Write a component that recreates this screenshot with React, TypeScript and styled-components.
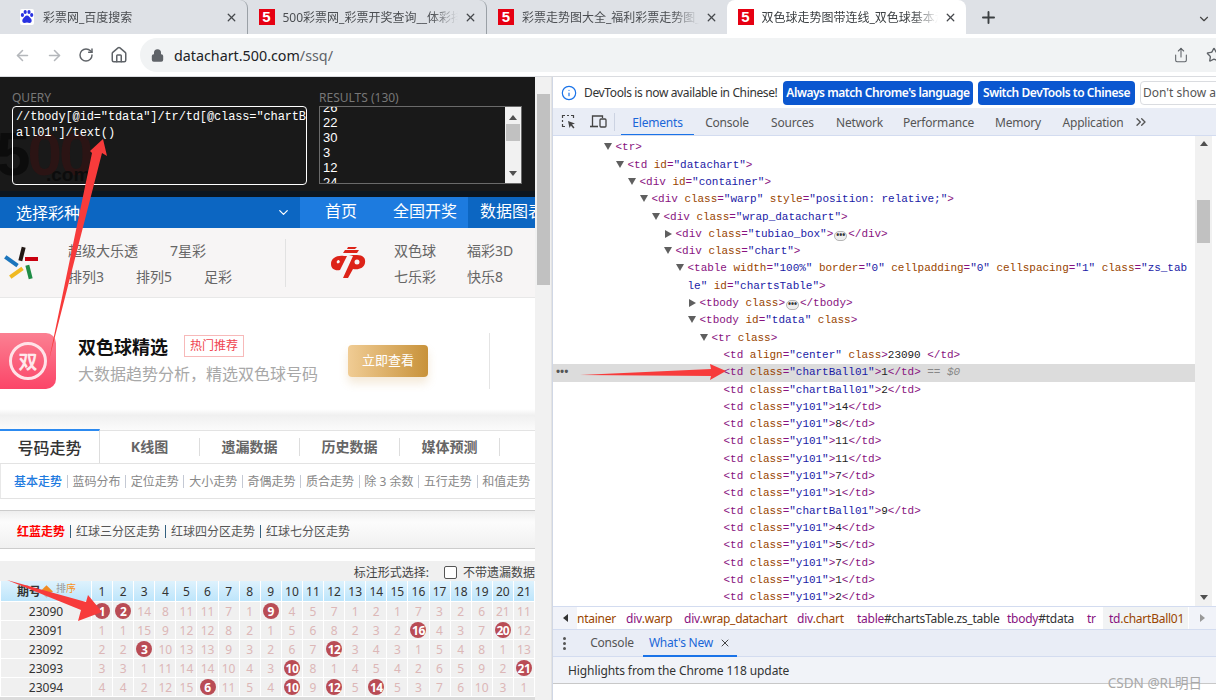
import { Fragment } from 'react';
import { createGlobalStyle, styled } from 'styled-components';
import {
  ArrowLeft, ArrowRight, RotateCw, Home, Lock, Share, Star, X, Plus, ChevronDown, Info, ChevronsRight,
} from 'lucide-react';

const GlobalStyle = createGlobalStyle`
html, body {
  margin: 0;
  padding: 0;
  overflow: hidden;
  background: #fff;
}
* {
  box-sizing: border-box;
}
`;

const SANS = `"Noto Sans", "Noto Sans CJK SC", "Liberation Sans", sans-serif`;
const MONO = `"Liberation Mono", "Noto Sans CJK SC", monospace`;

const Shell = styled.div`
position: relative;
width: 1216px;
height: 700px;
display: flex;
flex-direction: column;
overflow: hidden;
font-family: ${SANS};
`;

const TabStrip = styled.div`
height: 34px;
flex: none;
display: flex;
align-items: stretch;
padding-left: 8px;
background: #dee1e6;
`;

const Tab = styled.div<{ $active?: boolean; $sep?: boolean }>`
width: 239.5px;
display: flex;
align-items: center;
padding: 0 9px 0 11px;
border-radius: 8px 8px 0 0;
background: ${(p) => (p.$active ? '#fff' : 'transparent')};
color: ${(p) => (p.$active ? '#3c4043' : '#4b4e52')};
border-right: ${(p) => (p.$sep ? '1px solid #9aa0a6' : 'none')};
background-clip: padding-box;
`;

const TabTitle = styled.span`
flex: 1;
min-width: 0;
margin: 0 6px 0 8px;
font-size: 12px;
white-space: nowrap;
overflow: hidden;
-webkit-mask-image: linear-gradient(90deg, #000 85%, transparent);
mask-image: linear-gradient(90deg, #000 85%, transparent);
`;

const FaviconSlot = styled.span`
width: 16px;
height: 16px;
flex: none;
display: flex;
justify-content: center;
`;

const FiveIcon = styled.span`
width: 16px;
height: 16px;
flex: none;
display: flex;
align-items: center;
justify-content: center;
background: #e60012;
color: #fff;
font: 900 15px/16px "Liberation Sans", sans-serif;
`;

const NewTab = styled.div`
width: 44px;
display: flex;
align-items: center;
justify-content: center;
color: #3c4043;
`;

const StripEnd = styled.div`
margin-left: auto;
padding: 9px 5px 0 0;
color: #444;
`;

const Toolbar = styled.div`
height: 43px;
flex: none;
display: flex;
align-items: center;
padding: 0 0 0 14px;
background: #fff;
border-bottom: 1px solid #dadce0;
`;

const NavIcon = styled.span<{ $dim?: boolean }>`
width: 32px;
display: flex;
color: ${(p) => (p.$dim ? '#b4b7bb' : '#5f6368')};
`;

const Omnibox = styled.div`
flex: 1;
height: 34px;
margin-left: -2px;
display: flex;
align-items: center;
padding-left: 11px;
border-radius: 17px 0 0 17px;
background: #f1f3f4;
color: #5f6368;
`;

const Url = styled.span`
margin-left: 10px;
font-size: 14.3px;
color: #202124;
& em {
  font-style: normal;
  color: #5f6368;
}
`;

const OmniActions = styled.div`
margin-left: auto;
display: flex;
gap: 17px;
margin-right: -6px;
color: #5f6368;
`;

const Main = styled.div`
flex: 1;
min-height: 0;
display: flex;
`;

const PagePane = styled.div`
width: 552px;
flex: none;
display: flex;
`;

const Page = styled.div`
width: 535px;
flex: none;
overflow: hidden;
background: #fff;
`;

const PageScroll = styled.div`
width: 17px;
flex: none;
padding: 17px 1px 0 2px;
background: #f1f1f1;
border-right: 1px solid #e3e3e3;
`;

const ScrollThumb = styled.div<{ $h: number }>`
height: ${(p) => p.$h}px;
background: #c1c1c1;
`;

const Query = styled.div`
position: relative;
height: 114px;
padding: 13px 13px 0 12px;
display: flex;
gap: 12px;
background: #191919;
overflow: hidden;
`;

const GhostLogo = styled.div`
position: absolute;
left: -4px;
top: 46px;
font: 700 62px/62px "Liberation Sans", sans-serif;
letter-spacing: -3px;
color: #0c0c0c;
& em {
  font-style: normal;
  color: #2b1414;
}
& small {
  position: absolute;
  left: 50px;
  top: 42px;
  font-size: 19px;
  line-height: 20px;
  letter-spacing: 0;
}
`;

const QueryCol = styled.div<{ $w: number }>`
position: relative;
width: ${(p) => p.$w}px;
flex: none;
`;

const QueryLabel = styled.div`
height: 16px;
font-size: 12px;
line-height: 15px;
color: #777;
`;

const QueryBox = styled.div`
position: relative;
height: 79px;
padding: 2px 0 0 3px;
border: 1px solid #fff;
border-radius: 4px;
color: #fff;
font: 12px/16px ${MONO};
letter-spacing: -0.13px;
word-break: break-all;
`;

const ResultBox = styled.div`
height: 78px;
display: flex;
border: 1px solid #6a6a6a;
color: #fff;
overflow: hidden;
`;

const ResultList = styled.div`
flex: 1;
margin-top: -7px;
padding-left: 3px;
font: 13px/15px "Liberation Sans", sans-serif;
`;

const ResultScroll = styled.div`
width: 16px;
flex: none;
padding: 17px 1px 0;
display: flex;
flex-direction: column;
background: #f1f1f1;
color: #505050;
`;

const TinyArrow = styled.span<{ $down?: boolean }>`
display: block;
width: 0;
height: 0;
border-left: 4px solid transparent;
border-right: 4px solid transparent;
${(p) => (p.$down ? 'border-top: 5px solid currentColor;' : 'border-bottom: 5px solid currentColor;')}
`;

const ResultUp = styled.div`
position: absolute;
right: 5px;
top: 25px;
color: #505050;
`;

const ResultDown = styled.div`
position: absolute;
right: 5px;
top: 81px;
color: #505050;
`;

const Band = styled.div`
height: 6px;
background: #0c1620;
`;

const NavBar = styled.div`
height: 31px;
display: flex;
background: #0c66c2;
color: #fff;
font-size: 16px;
line-height: 28px;
white-space: nowrap;
overflow: hidden;
`;

const NavPick = styled.div`
width: 300px;
flex: none;
display: flex;
align-items: center;
justify-content: space-between;
padding: 0 9px 0 16px;
`;

const NavHome = styled.div`
width: 168px;
flex: none;
display: flex;
gap: 36px;
padding-left: 25px;
background: #1d7bdf;
`;

const NavRest = styled.div`
padding-left: 12px;
`;

const Lottery = styled.div`
height: 70px;
display: flex;
align-items: center;
background: #f7f5f5;
border-bottom: 1px solid #e8e8e8;
color: #666;
font-size: 14px;
`;

const LotteryGroup = styled.div<{ $divided?: boolean; $w: number }>`
width: ${(p) => p.$w}px;
height: 48px;
flex: none;
display: flex;
align-items: center;
${(p) => (p.$divided ? 'border-right: 1px solid #e2e2e2;' : '')}
`;

const LogoBox = styled.span<{ $left: number; $w: number }>`
margin-left: ${(p) => p.$left}px;
width: ${(p) => p.$w}px;
flex: none;
display: flex;
`;

const LinkRows = styled.div`
display: flex;
flex-direction: column;
gap: 7px;
padding-top: 1px;
`;

const LinkRow = styled.div<{ $gap: number }>`
display: flex;
gap: ${(p) => p.$gap}px;
line-height: 19px;
white-space: nowrap;
`;

const Promo = styled.div`
height: 111px;
padding-top: 35px;
display: flex;
align-items: flex-start;
`;

const PromoIcon = styled.div`
width: 56px;
height: 56px;
flex: none;
display: flex;
align-items: center;
justify-content: center;
border-radius: 0 10px 10px 0;
background: linear-gradient(180deg, #fb8092, #fb4568);
`;

const PromoSeal = styled.span`
width: 38px;
height: 38px;
display: flex;
align-items: center;
justify-content: center;
border: 3px solid #ffe3e8;
border-radius: 50%;
color: #ffe9ec;
font-size: 19px;
font-weight: 700;
`;

const PromoBody = styled.div`
width: 270px;
flex: none;
margin-left: 22px;
`;

const PromoHead = styled.div`
height: 26px;
display: flex;
align-items: center;
gap: 16px;
`;

const PromoTitle = styled.span`
font-size: 18px;
font-weight: 700;
color: #111;
`;

const PromoTag = styled.span`
height: 22px;
padding: 0 5px;
border: 1px solid #f7b9b9;
font-size: 12px;
line-height: 20px;
color: #f0454f;
`;

const PromoDesc = styled.div`
margin-top: 3px;
font-size: 16px;
line-height: 24px;
color: #a8a8a8;
white-space: nowrap;
`;

const PromoButton = styled.div`
width: 80px;
height: 32px;
flex: none;
margin: 12px 0 0 0;
border-radius: 4px;
background: linear-gradient(90deg, #f0cc94, #c8923a);
box-shadow: 0 6px 10px rgba(200, 146, 58, 0.2);
color: #fff;
font-size: 13px;
line-height: 30px;
text-align: center;
`;

const PromoDivider = styled.div`
width: 1px;
height: 56px;
flex: none;
margin-left: 61px;
background: #e4e4e4;
`;

const Fade = styled.div`
height: 21px;
background: linear-gradient(180deg, #fff, #f0f0f0 30%, #fbfbfb);
`;

const TabsRow = styled.div`
height: 34px;
display: flex;
align-items: stretch;
border-top: 1px solid #e3e3e3;
border-bottom: 1px solid #e3e3e3;
white-space: nowrap;
`;

const ChartTab = styled.div<{ $active?: boolean }>`
width: 100px;
flex: none;
display: flex;
align-items: center;
justify-content: center;
${(p) => (p.$active
    ? `
  height: 34px;
  margin-top: -2px;
  border-top: 2px solid #2c8af0;
  border-right: 1px solid #ddd;
  background: #fff;
  color: #333;
  font-size: 16px;
  font-weight: 500;
`
    : `
  color: #666;
  font-size: 14px;
  font-weight: 700;
  & span {
    width: 100%;
    border-right: 1px solid #ddd;
    text-align: center;
    line-height: 18px;
  }
`)}
`;

const SubNav = styled.div`
height: 35px;
display: flex;
align-items: center;
padding-left: 13px;
border-left: 1px solid #e8e8e8;
border-bottom: 1px solid #e3e3e3;
font-size: 12px;
color: #888;
white-space: nowrap;
`;

const SubLink = styled.span<{ $on?: boolean }>`
color: ${(p) => (p.$on ? '#1e7be0' : '#888')};
font-weight: ${(p) => (p.$on ? 500 : 400)};
`;

const Bar = styled.i`
width: 1px;
height: 13px;
flex: none;
margin: 0 4.7px;
background: #c4c9d4;
`;

const RedBlue = styled.div`
height: 39px;
margin-top: 11px;
display: flex;
align-items: center;
padding: 3px 0 0 17px;
border-top: 1px solid #ccc;
border-bottom: 1px solid #ccc;
background: linear-gradient(180deg, #eee, #fcfcfc 30%, #f0f0f0);
font-size: 12px;
color: #555;
white-space: nowrap;
`;

const RedLink = styled.span`
color: #f00;
font-weight: 700;
`;

const DarkBar = styled.i`
width: 1px;
height: 13px;
flex: none;
margin: 0 5px;
background: #33607f;
`;

const Chart = styled.div`
margin-top: 12px;
background: #f0f0f0;
overflow: hidden;
`;

const ChartTools = styled.div`
height: 20px;
display: flex;
align-items: center;
justify-content: flex-end;
padding-top: 2px;
font-size: 12px;
color: #444;
white-space: nowrap;
`;

const Check = styled.span`
width: 13px;
height: 13px;
margin: 0 6px 0 15px;
border: 1px solid #555;
border-radius: 2px;
background: #fff;
`;

const Grid = styled.div`
width: 560px;
display: grid;
grid-template-columns: 90px repeat(22, 20.1px);
grid-auto-rows: 18px;
grid-template-rows: 20px;
gap: 1px;
padding: 0 0 1px 1px;
background: #fff;
`;

const HeadCell = styled.div`
display: flex;
align-items: center;
justify-content: center;
background: linear-gradient(180deg, #def2fd, #bde5fb);
font-size: 12px;
color: #333;
`;

const HeadFirst = styled(HeadCell)`
justify-content: flex-start;
padding-left: 16px;
font-weight: 700;
`;

const SortMark = styled.span`
margin: 0 0 0 1px;
width: 9px;
height: 9px;
transform: rotate(45deg);
background: linear-gradient(135deg, #f08a24 50%, #bbb 50%);
`;

const SortText = styled.span`
margin: -7px 0 0 5px;
font-size: 10px;
font-weight: 400;
color: #999;
& em {
  font-style: normal;
  color: #f7941d;
}
`;

const IssueCell = styled.div`
display: flex;
align-items: center;
justify-content: center;
background: #f0f0f0;
font-size: 12px;
color: #333;
`;

const NumCell = styled.div`
display: flex;
align-items: center;
justify-content: center;
background: #f0f0f0;
font-size: 12px;
color: #dcb7b7;
`;

const Ball = styled.span`
width: 16px;
height: 16px;
flex: none;
display: flex;
align-items: center;
justify-content: center;
border-radius: 50%;
background: #b94c55;
color: #fff;
font-size: 12px;
font-weight: 700;
letter-spacing: -0.5px;
`;

const Hscroll = styled.div`
height: 4px;
background: #dcdcdc;
`;

const DevTools = styled.div`
flex: 1;
min-width: 0;
display: flex;
flex-direction: column;
border-left: 1px solid #d0d7e5;
font-size: 12px;
color: #444;
`;

const InfoBar = styled.div`
height: 31px;
flex: none;
display: flex;
align-items: center;
padding-left: 8px;
gap: 5px;
background: #fff;
white-space: nowrap;
overflow: hidden;
& > svg {
  flex: none;
}
`;

const InfoText = styled.span`
width: 194px;
flex: none;
margin-left: 2px;
font-size: 12px;
letter-spacing: -0.37px;
color: #333;
`;

const InfoButton = styled.span<{ $w: number; $plain?: boolean }>`
width: ${(p) => p.$w}px;
height: 24px;
flex: none;
display: flex;
align-items: center;
justify-content: ${(p) => (p.$plain ? 'flex-start' : 'center')};
padding-left: ${(p) => (p.$plain ? '2px' : '0')};
border-radius: 4px;
background: ${(p) => (p.$plain ? '#fff' : '#0b57d0')};
border: ${(p) => (p.$plain ? '1px solid #dadce0' : 'none')};
color: ${(p) => (p.$plain ? '#555' : '#fff')};
font-size: 12px;
font-weight: ${(p) => (p.$plain ? 400 : 600)};
letter-spacing: ${(p) => (p.$plain ? '0' : '-0.45px')};
`;

const DevTabs = styled.div`
height: 28px;
flex: none;
display: flex;
align-items: stretch;
padding-left: 8px;
background: #e9edf6;
border-bottom: 1px solid #d3dcf0;
white-space: nowrap;
overflow: hidden;
`;

const DevIcon = styled.span<{ $w: number }>`
width: ${(p) => p.$w}px;
flex: none;
display: flex;
align-items: center;
color: #444;
`;

const DevSep = styled.i`
width: 1px;
height: 18px;
flex: none;
align-self: center;
margin: 0 6px 0 0;
background: #ccd3e2;
`;

const DevTab = styled.span<{ $w: number; $on?: boolean }>`
width: ${(p) => p.$w}px;
flex: none;
display: flex;
align-items: center;
justify-content: center;
padding-top: 2px;
margin-bottom: -1px;
border-bottom: 2px solid ${(p) => (p.$on ? '#1a73e8' : 'transparent')};
color: ${(p) => (p.$on ? '#1a66d8' : '#555')};
font-size: 12px;
letter-spacing: -0.2px;
`;

const More = styled.span`
display: flex;
align-items: center;
color: #555;
`;

const TreePane = styled.div`
flex: 1;
min-height: 0;
display: flex;
background: #fff;
`;

const Tree = styled.div`
flex: 1;
min-width: 0;
padding-top: 3.4px;
font: 11px/17.3px ${MONO};
letter-spacing: -0.03px;
overflow: hidden;
`;

const TreeRow = styled.div<{ $depth: number; $hi?: boolean }>`
position: relative;
display: flex;
padding: 0 5px 0 ${(p) => 50.5 + p.$depth * 12}px;
background: ${(p) => (p.$hi ? '#dcdcdc' : 'transparent')};
`;

const Twisty = styled.span<{ $open?: boolean; $leaf?: boolean }>`
width: 12px;
flex: none;
display: flex;
justify-content: flex-start;
padding-top: 4px;
&::before {
  content: '';
  display: ${(p) => (p.$leaf ? 'none' : 'block')};
  width: 0;
  height: 0;
  ${(p) => (p.$open
    ? 'border-left: 4px solid transparent; border-right: 4px solid transparent; border-top: 7px solid #5f5f5f;'
    : 'border-top: 4px solid transparent; border-bottom: 4px solid transparent; border-left: 7px solid #5f5f5f; margin-left: 1px;')}
}
`;

const Code = styled.div`
flex: 1;
min-width: 0;
word-break: break-all;
white-space: pre-wrap;
color: #222;
`;

const TagText = styled.span`
color: #881280;
`;

const AttrText = styled.span`
color: #994500;
`;

const ValText = styled.span`
color: #1a1aa6;
`;

const Ellipsis = styled.span`
display: inline-block;
width: 13px;
height: 10px;
margin: 0 1px;
border: 1px solid #b5b5b5;
border-radius: 5px;
background: #eee;
vertical-align: -1px;
font: 700 8px/6px ${SANS};
text-align: center;
color: #333;
`;

const DollarZero = styled.span`
color: #888;
& em {
  font-style: italic;
}
`;

const RowDots = styled.span`
position: absolute;
left: 3px;
top: 0;
font: 700 11px/14px ${SANS};
color: #555;
`;

const TreeScroll = styled.div`
width: 21px;
flex: none;
display: flex;
flex-direction: column;
align-items: center;
padding: 5px 4px 0 0;
color: #505050;
background: linear-gradient(90deg, #f1f1f1 17px, #fff 17px);
`;

const TreeThumb = styled.div`
width: 13px;
height: 43px;
margin-top: 54px;
background: #c1c1c1;
`;

const TreeBottomArrow = styled.div`
margin-top: auto;
padding-bottom: 6px;
`;

const Crumbs = styled.div`
height: 24px;
flex: none;
display: flex;
align-items: stretch;
background: #fff;
border-top: 1px solid #d3dcf0;
border-bottom: 1px solid #d3dcf0;
font-size: 12px;
white-space: nowrap;
overflow: hidden;
`;

const CrumbArrow = styled.span<{ $dim?: boolean; $w: number }>`
width: ${(p) => p.$w}px;
flex: none;
display: flex;
align-items: center;
justify-content: center;
background: #f1f3f9;
color: ${(p) => (p.$dim ? '#999' : '#333')};
`;

const CrumbSide = styled.span<{ $right?: boolean }>`
width: 0;
height: 0;
border-top: 4px solid transparent;
border-bottom: 4px solid transparent;
${(p) => (p.$right ? 'border-left: 5px solid currentColor;' : 'border-right: 5px solid currentColor;')}
`;

const CrumbList = styled.div`
flex: 1;
min-width: 0;
display: flex;
align-items: stretch;
overflow: hidden;
`;

const Crumb = styled.span<{ $w: number; $on?: boolean }>`
width: ${(p) => p.$w}px;
flex: none;
display: flex;
align-items: center;
padding-left: ${(p) => (p.$on ? '6px' : '0')};
background: ${(p) => (p.$on ? '#f1f3f4' : 'transparent')};
color: #994500;
letter-spacing: -0.25px;
& b {
  font-weight: 400;
  color: #881280;
}
& em {
  font-style: normal;
  color: #333;
}
`;

const DrawerTabs = styled.div`
height: 27px;
flex: none;
display: flex;
align-items: stretch;
background: #e9edf6;
border-bottom: 1px solid #d3dcf0;
`;

const KebabSlot = styled.span`
width: 28px;
flex: none;
display: flex;
flex-direction: column;
align-items: center;
justify-content: center;
gap: 2px;
padding-right: 5px;
& i {
  width: 3px;
  height: 3px;
  border-radius: 50%;
  background: #555;
}
`;

const DrawerTab = styled.span<{ $on?: boolean; $w: number }>`
width: ${(p) => p.$w}px;
flex: none;
display: flex;
align-items: center;
justify-content: center;
gap: 6px;
margin-bottom: -1px;
border-bottom: 2px solid ${(p) => (p.$on ? '#1a73e8' : 'transparent')};
color: ${(p) => (p.$on ? '#1a66d8' : '#555')};
letter-spacing: -0.2px;
`;

const DrawerBody = styled.div`
height: 27px;
flex: none;
display: flex;
align-items: center;
padding-left: 15px;
background: #f1f3f8;
border-bottom: 1px solid #c8c8c8;
color: #333;
letter-spacing: -0.1px;
`;

const DrawerRest = styled.div`
height: 16px;
flex: none;
background: #fff;
`;

const Watermark = styled.div`
position: absolute;
right: 14px;
top: 674px;
font-size: 13.5px;
line-height: 18px;
color: #a8a8a8;
`;

const Marks = styled.svg`
position: absolute;
left: 0;
top: 0;
pointer-events: none;
`;

const tabs = [
  { title: '彩票网_百度搜索', icon: 'baidu', sep: true },
  { title: '500彩票网_彩票开奖查询__体彩排列三开奖', icon: 'five', sep: true },
  { title: '彩票走势图大全_福利彩票走势图_体彩走势', icon: 'five' },
  { title: '双色球走势图带连线_双色球基本走势图_500', icon: 'five', active: true },
];

const lines: { d: number; open?: boolean; closed?: boolean; src: string; hi?: boolean }[] = [
  { d: 0, open: true, src: '<tr>' },
  { d: 1, open: true, src: '<td id="datachart">' },
  { d: 2, open: true, src: '<div id="container">' },
  { d: 3, open: true, src: '<div class="warp" style="position: relative;">' },
  { d: 4, open: true, src: '<div class="wrap_datachart">' },
  { d: 5, closed: true, src: '<div class="tubiao_box">…</div>' },
  { d: 5, open: true, src: '<div class="chart">' },
  { d: 6, open: true, src: '<table width="100%" border="0" cellpadding="0" cellspacing="1" class="zs_table" id="chartsTable">' },
  { d: 7, closed: true, src: '<tbody class>…</tbody>' },
  { d: 7, open: true, src: '<tbody id="tdata" class>' },
  { d: 8, open: true, src: '<tr class>' },
  { d: 9, src: '<td align="center" class>23090 </td>' },
  { d: 9, src: '<td class="chartBall01">1</td>', hi: true },
  { d: 9, src: '<td class="chartBall01">2</td>' },
  { d: 9, src: '<td class="y101">14</td>' },
  { d: 9, src: '<td class="y101">8</td>' },
  { d: 9, src: '<td class="y101">11</td>' },
  { d: 9, src: '<td class="y101">11</td>' },
  { d: 9, src: '<td class="y101">7</td>' },
  { d: 9, src: '<td class="y101">1</td>' },
  { d: 9, src: '<td class="chartBall01">9</td>' },
  { d: 9, src: '<td class="y101">4</td>' },
  { d: 9, src: '<td class="y101">5</td>' },
  { d: 9, src: '<td class="y101">7</td>' },
  { d: 9, src: '<td class="y101">1</td>' },
  { d: 9, src: '<td class="y101">2</td>' },
];

// balls are written as negative numbers
const draws: [string, number[]][] = [
  ['23090', [-1, -2, 14, 8, 11, 11, 7, 1, -9, 4, 5, 7, 1, 2, 1, 7, 3, 2, 6, 21, 11]],
  ['23091', [1, 1, 15, 9, 12, 12, 8, 2, 1, 5, 6, 8, 2, 3, 2, -16, 4, 3, 7, -20, 12]],
  ['23092', [2, 2, -3, 10, 13, 13, 9, 3, 2, 6, 7, -12, 3, 4, 3, 1, 5, 4, 8, 1, 13]],
  ['23093', [3, 3, 1, 11, 14, 14, 10, 4, 3, -10, 8, 1, 4, 5, 4, 2, 6, 5, 9, 2, -21]],
  ['23094', [4, 4, 2, 12, 15, -6, 11, 5, 4, -10, 9, -12, 5, -14, 5, 3, 7, 6, 10, 3, 1]],
];

const subLinks = ['蓝码分布', '定位走势', '大小走势', '奇偶走势', '质合走势', '除 3 余数', '五行走势', '和值走势'];

function renderCode(src: string) {
  const parts = src.match(/"[^"]*"|<\/?\w+|\/?>|=|\s+|[^\s<>="]+/g) || [];
  let inTag = false;
  return parts.map((part, i) => {
    const key = `${part}-${i}`;
    if (part.startsWith('<')) {
      inTag = true;
      return <TagText key={key}>{part}</TagText>;
    }
    if (part === '>' || part === '/>') {
      inTag = false;
      return <TagText key={key}>{part}</TagText>;
    }
    if (part === '…') return <Ellipsis key={key}>•••</Ellipsis>;
    if (part === '=') return <TagText key={key}>=</TagText>;
    if (part.startsWith('"')) return <ValText key={key}>{part}</ValText>;
    if (inTag && part.trim()) return <AttrText key={key}>{part}</AttrText>;
    return <span key={key}>{part}</span>;
  });
}

function BaiduIcon() {
  return (
    <svg width="14" height="16" viewBox="0 0 14 16">
      <rect width="14" height="16" rx="2" fill="#fff" />
      <g fill="#2932e1">
        <ellipse cx="2.4" cy="6" rx="1.6" ry="2" />
        <ellipse cx="5.2" cy="3" rx="1.6" ry="2.1" />
        <ellipse cx="9" cy="3" rx="1.6" ry="2.1" />
        <ellipse cx="11.7" cy="6" rx="1.6" ry="2" />
        <path d="M7 6.5c-2 0-2.6 2-3.8 3-1.3 1.1-1.4 4.5 1.3 4.5 1 0 1.6-.4 2.5-.4s1.500.4 2.500.4c2.700 0 2.600-3.400 1.300-4.500-1.200-1-1.800-3-3.800-3z" />
      </g>
    </svg>
  );
}

function StarLogo() {
  return (
    <svg width="34" height="34" viewBox="0 0 34 34">
      <rect x="16" y="1" width="4" height="14" fill="#231815" transform="rotate(14 18 8)" />
      <rect x="21" y="11" width="15" height="4" fill="#c9000f" />
      <rect x="0" y="13" width="15" height="4" fill="#1c75bc" transform="rotate(35 7 15)" />
      <rect x="5" y="25" width="15" height="4" fill="#f0b921" transform="rotate(-35 12 27)" />
      <rect x="23" y="19" width="4" height="14" fill="#1e8c45" transform="rotate(-14 25 26)" />
    </svg>
  );
}

function WelfareLogo() {
  return (
    <svg width="36" height="32" viewBox="0 0 36 32">
      <g fill="#dd2318">
        <path d="M14 9c-7-1-13 2-13 8 0 5 4 7 9 6l7-14z" />
        <path d="M19 8h8c6 0 9 3 8 8-1 5-6 7-12 6l-5 9h-5L23 9z" />
        <path d="M15 3h14l-2 3H13z" />
        <path d="M18 0h9l-2 2h-8z" />
      </g>
      <ellipse cx="27" cy="15" rx="2.500" ry="2.500" fill="#f7f5f5" />
      <path d="M9 13c-2 0-3 2-2 3 1 1 2 0 3-1z" fill="#f7f5f5" />
    </svg>
  );
}

function InspectIcon() {
  return (
    <svg width="16" height="16" viewBox="0 0 16 16" fill="none" stroke="#444">
      <path d="M1.500 4V1.500H4M6 1.500h2M10 1.500h2.500V4M1.500 6v2M1.500 10v2.500H4" strokeWidth="1.200" />
      <path d="M7 7l7 2.500-3 1 2.500 3-1.200 1-2.400-3-1.400 2.500z" fill="#444" stroke="none" />
    </svg>
  );
}

function DeviceIcon() {
  return (
    <svg width="17" height="15" viewBox="0 0 17 15" fill="none" stroke="#444" strokeWidth="1.300">
      <path d="M2.500 12V2h10v2" />
      <path d="M0 12.500h8" strokeWidth="1.600" />
      <rect x="10" y="5" width="6" height="8" rx="1" />
    </svg>
  );
}

function App() {
  return (
    <Shell>
      <GlobalStyle />
      <TabStrip>
        {tabs.map((tab) => (
          <Tab key={tab.title} $active={tab.active} $sep={tab.sep}>
            {tab.icon === 'baidu' ? <FaviconSlot><BaiduIcon /></FaviconSlot> : <FiveIcon>5</FiveIcon>}
            <TabTitle>{tab.title}</TabTitle>
            <X size={13} strokeWidth={2.4} color="#45484c" />
          </Tab>
        ))}
        <NewTab><Plus size={19} strokeWidth={2.4} /></NewTab>
        <StripEnd><ChevronDown size={14} /></StripEnd>
      </TabStrip>
      <Toolbar>
        <NavIcon $dim><ArrowLeft size={17} strokeWidth={2.2} /></NavIcon>
        <NavIcon $dim><ArrowRight size={17} strokeWidth={2.2} /></NavIcon>
        <NavIcon><RotateCw size={16} strokeWidth={2.2} /></NavIcon>
        <NavIcon><Home size={18} strokeWidth={2} /></NavIcon>
        <Omnibox>
          <Lock size={13} strokeWidth={3} fill="currentColor" />
          <Url>datachart.500.com<em>/ssq/</em></Url>
          <OmniActions>
            <Share size={16} strokeWidth={1.6} />
            <Star size={16} strokeWidth={2} />
          </OmniActions>
        </Omnibox>
      </Toolbar>
      <Main>
        <PagePane>
          <Page>
            <Query>
              <GhostLogo>5<em>00</em><small>.com</small></GhostLogo>
              <QueryCol $w={295}>
                <QueryLabel>QUERY</QueryLabel>
                <QueryBox>{'//tbody[@id="tdata"]/tr/td[@class="chartBall01"]/text()'}</QueryBox>
              </QueryCol>
              <QueryCol $w={203}>
                <QueryLabel>RESULTS (130)</QueryLabel>
                <ResultBox>
                  <ResultList>
                    {['26', '22', '30', '3', '12', '24'].map((n, i) => <div key={`${n}-${i}`}>{n}</div>)}
                  </ResultList>
                  <ResultScroll><ScrollThumb $h={17} /></ResultScroll>
                </ResultBox>
                <ResultUp><TinyArrow /></ResultUp>
                <ResultDown><TinyArrow $down /></ResultDown>
              </QueryCol>
            </Query>
            <Band />
            <NavBar>
              <NavPick>
                <span>选择彩种</span>
                <ChevronDown size={15} strokeWidth={2} />
              </NavPick>
              <NavHome>
                <span>首页</span>
                <span>全国开奖</span>
              </NavHome>
              <NavRest>数据图表</NavRest>
            </NavBar>
            <Lottery>
              <LotteryGroup $w={286} $divided>
                <LogoBox $left={4} $w={64}><StarLogo /></LogoBox>
                <LinkRows>
                  <LinkRow $gap={32}><span>超级大乐透</span><span>7星彩</span></LinkRow>
                  <LinkRow $gap={32}><span>排列3</span><span>排列5</span><span>足彩</span></LinkRow>
                </LinkRows>
              </LotteryGroup>
              <LotteryGroup $w={240}>
                <LogoBox $left={44} $w={64}><WelfareLogo /></LogoBox>
                <LinkRows>
                  <LinkRow $gap={31}><span>双色球</span><span>福彩3D</span></LinkRow>
                  <LinkRow $gap={31}><span>七乐彩</span><span>快乐8</span></LinkRow>
                </LinkRows>
              </LotteryGroup>
            </Lottery>
            <Promo>
              <PromoIcon><PromoSeal>双</PromoSeal></PromoIcon>
              <PromoBody>
                <PromoHead>
                  <PromoTitle>双色球精选</PromoTitle>
                  <PromoTag>热门推荐</PromoTag>
                </PromoHead>
                <PromoDesc>大数据趋势分析，精选双色球号码</PromoDesc>
              </PromoBody>
              <PromoButton>立即查看</PromoButton>
              <PromoDivider />
            </Promo>
            <Fade />
            <TabsRow>
              <ChartTab $active>号码走势</ChartTab>
              <ChartTab><span>K线图</span></ChartTab>
              <ChartTab><span>遗漏数据</span></ChartTab>
              <ChartTab><span>历史数据</span></ChartTab>
              <ChartTab><span>媒体预测</span></ChartTab>
              <ChartTab><span>更多</span></ChartTab>
            </TabsRow>
            <SubNav>
              <SubLink $on>基本走势</SubLink>
              {subLinks.map((link) => (
                <Fragment key={link}>
                  <Bar />
                  <SubLink>{link}</SubLink>
                </Fragment>
              ))}
              <Bar />
            </SubNav>
            <RedBlue>
              <RedLink>红蓝走势</RedLink>
              <DarkBar />红球三分区走势
              <DarkBar />红球四分区走势
              <DarkBar />红球七分区走势
            </RedBlue>
            <Chart>
              <ChartTools>
                标注形式选择:
                <Check />
                不带遗漏数据
              </ChartTools>
              <Grid>
                <HeadFirst>
                  期号
                  <SortMark />
                  <SortText>排<em>序</em></SortText>
                </HeadFirst>
                {Array.from({ length: 22 }, (_, i) => <HeadCell key={i}>{i + 1}</HeadCell>)}
                {draws.map(([issue, nums]) => [
                  <IssueCell key={issue}>{issue}</IssueCell>,
                  ...nums.map((n, i) => (
                    <NumCell key={`${issue}-${i}`}>{n < 0 ? <Ball>{-n}</Ball> : n}</NumCell>
                  )),
                  <NumCell key={`${issue}-end`} />,
                ])}
              </Grid>
              <Hscroll />
            </Chart>
          </Page>
          <PageScroll><ScrollThumb $h={191} /></PageScroll>
        </PagePane>
        <DevTools>
          <InfoBar>
            <Info size={16} strokeWidth={1.8} color="#1a73e8" />
            <InfoText>DevTools is now available in Chinese!</InfoText>
            <InfoButton $w={190}>Always match Chrome&apos;s language</InfoButton>
            <InfoButton $w={157}>Switch DevTools to Chinese</InfoButton>
            <InfoButton $w={100} $plain>Don&apos;t show again</InfoButton>
          </InfoBar>
          <DevTabs>
            <DevIcon $w={29}><InspectIcon /></DevIcon>
            <DevIcon $w={24}><DeviceIcon /></DevIcon>
            <DevSep />
            <DevTab $w={73} $on>Elements</DevTab>
            <DevTab $w={66}>Console</DevTab>
            <DevTab $w={65}>Sources</DevTab>
            <DevTab $w={69}>Network</DevTab>
            <DevTab $w={89}>Performance</DevTab>
            <DevTab $w={70}>Memory</DevTab>
            <DevTab $w={80}>Application</DevTab>
            <More><ChevronsRight size={16} /></More>
          </DevTabs>
          <TreePane>
            <Tree>
              {lines.map((line, i) => (
                <TreeRow key={`${line.src}-${i}`} $depth={line.d} $hi={line.hi}>
                  {line.hi && <RowDots>•••</RowDots>}
                  <Twisty $open={line.open} $leaf={!line.open && !line.closed} />
                  <Code>
                    {renderCode(line.src)}
                    {line.hi && <DollarZero> == <em>$0</em></DollarZero>}
                  </Code>
                </TreeRow>
              ))}
            </Tree>
            <TreeScroll>
              <TinyArrow />
              <TreeThumb />
              <TreeBottomArrow><TinyArrow $down /></TreeBottomArrow>
            </TreeScroll>
          </TreePane>
          <Crumbs>
            <CrumbArrow $w={24}><CrumbSide /></CrumbArrow>
            <CrumbList>
              <Crumb $w={49}>ntainer</Crumb>
              <Crumb $w={58}><b>div</b>.warp</Crumb>
              <Crumb $w={113}><b>div</b>.wrap_datachart</Crumb>
              <Crumb $w={60}><b>div</b>.chart</Crumb>
              <Crumb $w={150}><b>table</b><em>#chartsTable.zs_table</em></Crumb>
              <Crumb $w={80}><b>tbody</b><em>#tdata</em></Crumb>
              <Crumb $w={16}><b>tr</b></Crumb>
              <Crumb $w={85} $on><b>td</b>.chartBall01</Crumb>
            </CrumbList>
            <CrumbArrow $w={27} $dim><CrumbSide $right /></CrumbArrow>
          </Crumbs>
          <DrawerTabs>
            <KebabSlot><i /><i /><i /></KebabSlot>
            <DrawerTab $w={62}>Console</DrawerTab>
            <DrawerTab $on $w={94}>What&apos;s New<X size={12} strokeWidth={2} color="#444" /></DrawerTab>
          </DrawerTabs>
          <DrawerBody>Highlights from the Chrome 118 update</DrawerBody>
          <DrawerRest />
        </DevTools>
      </Main>
      <Watermark>CSDN @RL明日</Watermark>
      <Marks width="1216" height="700" viewBox="0 0 1216 700">
        <g fill="#f73b3b">
          <polygon points="103,139 107,156 102,153 49,360 92,153 90,151" />
          <polygon points="7,580 86,602 88,595 102,612 78,621 81,610" />
          <polygon points="580,375 711,369 710,364 726,371 710,380 711,376" />
        </g>
      </Marks>
    </Shell>
  );
}

export default App;
